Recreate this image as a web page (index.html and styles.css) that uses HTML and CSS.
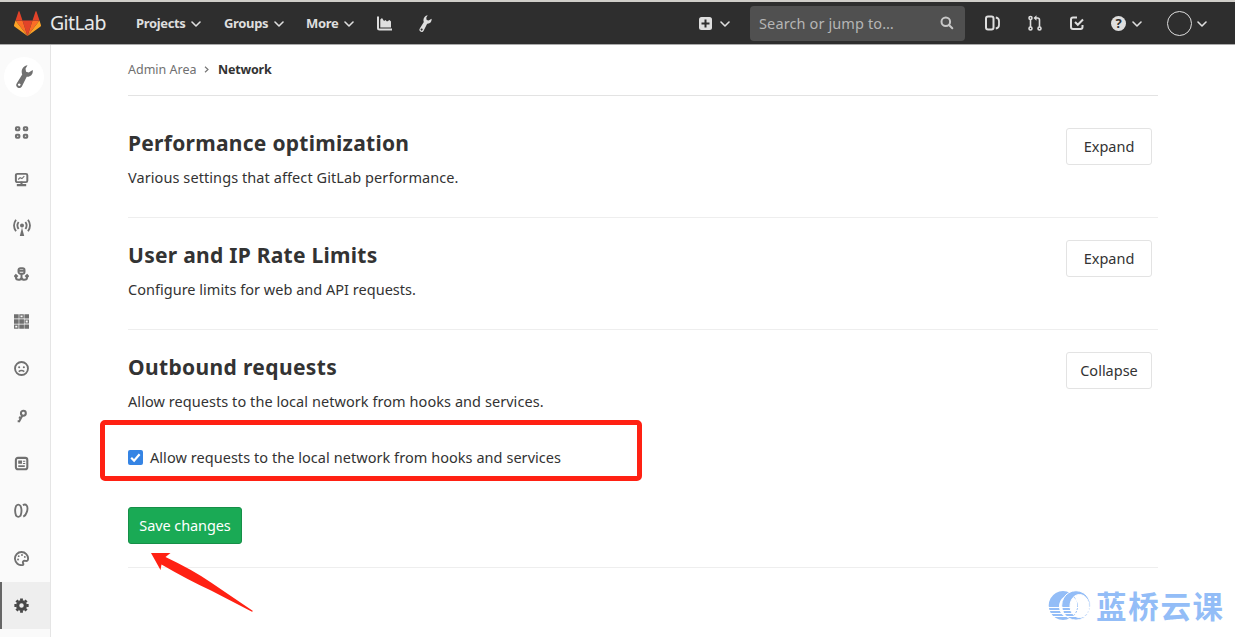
FILE: index.html
```html
<!DOCTYPE html>
<html lang="en">
<head>
<meta charset="utf-8">
<title>Network · GitLab</title>
<link rel="stylesheet" href="styles.css">
</head>
<body>
<svg class="defs" width="0" height="0" aria-hidden="true">
  <symbol id="chev" viewBox="0 0 10 6"><path d="M1 1l4 4 4-4" fill="none" stroke="currentColor" stroke-width="1.600" stroke-linecap="round" stroke-linejoin="round"/></symbol>
  <symbol id="wrench" viewBox="0 0 17 23"><path fill="currentColor" fill-rule="evenodd" d="M11.500.2 9.500 3.800l.6 3 2.600.8 4-2.600c.7 3.900-2 7.200-6 6.700L6 21.200c-.9 1.800-2.800 2.200-4.400 1.200-1.500-.9-1.900-2.600-.8-4.200L6.200 9.500C4.600 5.500 6.900.8 11.500.2zM3.200 18.400a1.300 1.300 0 1 0 .1 0z"/></symbol>
</svg>
<header class="navbar">
  <a class="brand">
    <svg width="27" height="25" viewBox="0 0 27 25"><path fill="#e24329" d="M13.500 25 8.500 9.500h10z"/><path fill="#fc6d26" d="M13.500 25 8.500 9.500H1.500zM13.500 25l5-15.500h7z"/><path fill="#fca326" d="M1.500 9.500 0 14.200c-.1.500 0 .9.400 1.200L13.500 25zM25.500 9.500l1.500 4.700c.1.500 0 .9-.4 1.200L13.500 25z"/><path fill="#e24329" d="M1.500 9.500h7l-3-9c-.2-.5-.8-.5-1 0zM25.500 9.500h-7l3-9c.2-.5.8-.5 1 0z"/></svg>
    <span class="brand-name">GitLab</span>
  </a>
  <nav class="menu">
    <a class="menu-item projects"><span>Projects</span><svg class="chev"><use href="#chev"/></svg></a>
    <a class="menu-item groups"><span>Groups</span><svg class="chev"><use href="#chev"/></svg></a>
    <a class="menu-item more"><span>More</span><svg class="chev"><use href="#chev"/></svg></a>
    <svg class="chart" width="15" height="15" viewBox="0 0 15 15"><path d="M1 .5V12q0 1.500 1.500 1.500H15" fill="none" stroke="currentColor" stroke-width="2"/><path fill="currentColor" d="M3.300 11.500v-8L5 2l2 3 1.500-1 1.500 1.500L12.500 4 14 5.500v6z"/></svg>
    <svg class="nav-wrench" width="13" height="17"><use href="#wrench"/></svg>
  </nav>
  <div class="tools">
    <svg width="13" height="13" viewBox="0 0 13 13"><rect width="13" height="13" rx="2.500" fill="currentColor"/><path d="M6.500 2.500v8M2.500 6.500h8" stroke="#2e2e2e" stroke-width="2"/></svg>
    <svg class="chev plus-chev"><use href="#chev"/></svg>
    <div class="search"><span>Search or jump to…</span><svg width="14" height="14" viewBox="0 0 14 14" fill="none" stroke="currentColor" stroke-width="2"><circle cx="5.800" cy="5.800" r="4.300"/><path d="m9 9 3.300 3.300" stroke-linecap="round"/></svg></div>
    <svg class="t-issues" width="15" height="16" viewBox="0 0 15 16" fill="none" stroke="currentColor" stroke-width="2"><rect x="1" y="1.500" width="7.500" height="13" rx="2"/><path d="M10.800 2.500q3.200.5 3.200 3.500v4q0 3-3.200 3.500" stroke-width="1.800"/></svg>
    <svg class="t-merge" width="14" height="16" viewBox="0 0 14 16" fill="none" stroke="currentColor" stroke-width="1.600"><circle cx="2.500" cy="3" r="1.500"/><circle cx="2.500" cy="13.500" r="1.500"/><circle cx="11.500" cy="13.500" r="1.500"/><path d="M2.500 4.500V12M11.500 12V5q0-2-2-2H7"/><path d="M8.500.3v5.400L5.500 3z" fill="currentColor" stroke="none"/></svg>
    <svg class="t-todo" width="14" height="14" viewBox="0 0 14 14" fill="none" stroke="currentColor" stroke-width="2"><path d="M7 1.500H3q-2 0-2 2V11q0 2 2 2h7.500q2 0 2-2V9"/><path d="m5 6 2.800 2.800L13 3.500"/></svg>
    <span class="help">?</span>
    <svg class="chev help-chev"><use href="#chev"/></svg>
    <span class="avatar"></span>
    <svg class="chev user-chev"><use href="#chev"/></svg>
  </div>
</header>
<div class="page">
  <aside class="sidebar">
    <div class="context"><span class="context-icon"><svg width="17" height="23"><use href="#wrench"/></svg></span></div>
    <a class="side"><svg viewBox="0 0 16 16"><g fill="none" stroke="currentColor" stroke-width="2.200"><rect x="2.100" y="2.300" width="3.600" height="3.300" rx=".8"/><rect x="10.500" y="2.300" width="3.600" height="3.300" rx=".8"/><rect x="2.100" y="10.300" width="3.600" height="3.300" rx=".8"/><rect x="10.500" y="10.300" width="3.600" height="3.300" rx=".8"/></g></svg></a>
    <a class="side"><svg viewBox="0 0 16 16" fill="none" stroke="currentColor"><rect x="2" y="2" width="12.200" height="8.800" rx="1.500" stroke-width="2.100"/><path d="m4.500 8 2-2 2 1 2.500-2.500" stroke-width="1.200"/><path d="M8 10v3M3 14h10" stroke-width="2.200"/></svg></a>
    <a class="side"><svg class="wide" viewBox="0 0 18 18" fill="none" stroke="currentColor" stroke-width="1.800"><circle cx="9" cy="7.500" r="2" fill="currentColor" stroke="none"/><path d="M5.600 4q-2.400 3.500 0 7M12.400 4q2.400 3.500 0 7M3 1.700Q-1 7.500 3 13.300M15 1.700q4 5.800 0 11.600"/><path d="m9 9.500-2.300 9h4.600z" fill="currentColor" stroke="none"/></svg></a>
    <a class="side"><svg viewBox="0 0 16 16" fill="none" stroke="currentColor" stroke-width="2.100"><rect x="4.800" y="1.300" width="6.400" height="5.800" rx="2"/><path d="M8 7v7M5 4h6M2 8.500V11q0 2.700 3 2.700 2.500 0 3-2.700.5 2.700 3 2.700 3 0 3-2.700V8.500M.3 10.500 2 8.700l2 1.800M12 10.500l2-1.800 1.700 1.800"/></svg></a>
    <a class="side"><svg viewBox="0 0 16 16"><path fill="currentColor" d="M0 .3h5v4.600H0zM11.100.3H16v4.600h-4.900zM0 5.700h5v4.600H0zM5.600 5.700h5v4.600h-5zM5.600 11.200h5v4.600h-5zM11.100 11.200H16v4.600h-4.900z"/><path fill="none" stroke="currentColor" stroke-width="1.300" d="M6.300 1h3.500v3.200H6.300zM11.800 6.400h3.500v3.200h-3.500zM.7 11.900h3.500v3.200H.7z"/></svg></a>
    <a class="side"><svg viewBox="0 0 16 16" fill="none" stroke="currentColor"><circle cx="8" cy="8" r="6.900" stroke-width="2"/><path d="M5 11.300q3-2.500 6 0" stroke-width="1.500"/><circle cx="5.500" cy="6.700" r="1.100" fill="currentColor" stroke="none"/><circle cx="10.500" cy="6.700" r="1.100" fill="currentColor" stroke="none"/></svg></a>
    <a class="side"><svg viewBox="0 0 16 16" fill="none" stroke="currentColor" stroke-width="2.200"><circle cx="10" cy="4.500" r="2.600"/><path d="m8.900 7-3.800 7M7.600 9.800 5.200 8.800M6.200 13H3.900"/></svg></a>
    <a class="side"><svg viewBox="0 0 16 16" fill="none" stroke="currentColor"><rect x="2" y="2" width="12.200" height="12.200" rx="2.200" stroke-width="2.200"/><path d="M4.500 10.800h7" stroke-width="1.800"/><path d="M4.500 4.800h4v3.500h-4z" fill="currentColor" stroke="none"/><path d="M9.500 5.500H12M9.500 8H12" stroke-width="1.100"/></svg></a>
    <a class="side"><svg viewBox="0 0 16 16" fill="none" stroke="currentColor" stroke-width="2"><path d="M2.200 3.200q-2 5 0 10.300 2.300 2.500 4.800 0 2-5.300 0-10.300-2.500-3-4.800 0zM9.500 2.300q2.500-1.600 4 .4 1.800 2.500 0 7.300-1 3.500-3.600 4.500"/></svg></a>
    <a class="side"><svg viewBox="0 0 16 16" fill="none" stroke="currentColor" stroke-width="2"><path d="M15 8.500A7 7 0 1 0 9 15c1 0 1.200-.8.800-1.700-1-2 .3-3.300 2.300-2.800 1.700.4 2.800-.1 2.900-2z"/><g fill="currentColor" stroke="none"><circle cx="5" cy="5.500" r="1"/><circle cx="8.500" cy="4.300" r="1"/><circle cx="11.500" cy="6.300" r="1"/><circle cx="4.300" cy="9" r="1"/></g></svg></a>
    <a class="side active"><svg viewBox="0 0 16 16" fill="none" stroke="currentColor"><circle cx="8" cy="8" r="4.100" stroke-width="3.400"/><path d="M8 .4v2.500M8 13.100v2.500M.4 8h2.500M13.100 8h2.500M2.600 2.600l1.700 1.700M11.700 11.700l1.700 1.700M2.600 13.400l1.700-1.700M11.700 4.300l1.700-1.700" stroke-width="3"/></svg></a>
  </aside>
  <main class="content">
    <div class="crumbs"><span class="crumb-area">Admin Area</span><svg width="5" height="7" viewBox="0 0 5 7"><path d="m1 .7 3 2.800-3 2.800" fill="none" stroke="#777" stroke-width="1.200"/></svg><b class="crumb-page">Network</b></div>
    <section class="setting first">
      <div><h4 class="h-perf">Performance optimization</h4><p class="p-perf">Various settings that affect GitLab performance.</p></div>
      <button class="btn">Expand</button>
    </section>
    <section class="setting">
      <div><h4 class="h-user">User and IP Rate Limits</h4><p class="p-user">Configure limits for web and API requests.</p></div>
      <button class="btn">Expand</button>
    </section>
    <section class="setting last">
      <div>
        <h4 class="h-out">Outbound requests</h4><p class="p-out">Allow requests to the local network from hooks and services.</p>
        <label class="check"><span class="box"><svg width="15" height="15" viewBox="0 0 15 15"><path d="m3.200 7.700 2.900 3 5.500-6.500" fill="none" stroke="#fff" stroke-width="2.200"/></svg></span><span class="check-text">Allow requests to the local network from hooks and services</span></label>
        <button class="save">Save changes</button>
      </div>
      <button class="btn collapse">Collapse</button>
    </section>
  </main>
</div>
<div class="highlight"></div>
<svg class="arrow" width="104" height="60" viewBox="0 0 104 60"><path fill="#ff2113" d="M0 0h19.500L14.500 4Q42 17 60 29.500L102 58l-1 .7L60 37.500Q38 27.500 10.500 11.500L9.500 17z"/></svg>
<div class="watermark">
  <svg width="43" height="31" viewBox="0 0 43 31">
    <path fill="#93bdf7" fill-rule="evenodd" d="M15 1a14.300 14.500 0 1 0 .01 0zM20.500 5.500a9.500 11 0 1 1-.01 0z"/>
    <path fill="#93bdf7" stroke="#fff" stroke-width="1" fill-rule="evenodd" d="M28 .7a14.300 14.700 0 1 0 .01 0zM31.500 4.500a9.500 11.500 0 1 1-.01 0z"/>
    <path stroke="#fff" stroke-width="1" d="M0 17.500h43M0 20.500h43M0 23.500h43M0 26.500h43"/>
  </svg>
  <span>蓝桥云课</span>
</div>
</body>
</html>
```
FILE: styles.css
```css
* { box-sizing: border-box; }
body { margin: 0; width: 1235px; height: 637px; overflow: hidden; position: relative; background: #fff; color: #333; font-family: "Noto Sans", "Open Sans", sans-serif; font-size: 14.500px; }
.defs { position: absolute; }
svg { display: block; flex: none; }
span, h4, p, b, button { white-space: nowrap; }
.navbar { height: 45px; background: #2e2e2e; border-top: 2px solid #d0cec9; border-bottom: 1px solid #aaa; color: #dedede; display: flex; align-items: center; padding-left: 14px; }
.brand { display: flex; align-items: center; gap: 9px; width: 122px; }
.brand-name { font-size: 19.500px; line-height: 24px; letter-spacing: -0.600px; color: #e8e8e8; }
.menu { display: flex; align-items: center; }
.menu-item { display: flex; align-items: center; gap: 6px; font-size: 13px; font-weight: 700; }
.chev { width: 10px; height: 6px; margin-top: 2px; }
.projects { width: 88px; }
.groups { width: 82px; }
.more { width: 71px; }
.projects span, .groups span, .more span { letter-spacing: -0.350px; }
.nav-wrench { margin-left: 27px; }
.tools { display: flex; align-items: center; margin-left: auto; padding-right: 28px; }
.plus-chev { margin-left: 8px; }
.search { width: 215px; height: 35px; margin-left: 20px; padding: 0 11px 0 9px; border-radius: 4px; background: #505050; display: flex; align-items: center; justify-content: space-between; color: #b5b5b5; font-size: 14.500px; letter-spacing: 0.120px; }
.search svg { color: #c8c8c8; }
.t-issues { margin-left: 20px; }
.t-merge { margin-left: 28px; }
.t-todo { margin-left: 28px; }
.help { margin-left: 27px; width: 15px; height: 15px; border-radius: 50%; background: #dedede; color: #2e2e2e; font-weight: 700; font-size: 13px; line-height: 15px; text-align: center; }
.help-chev { margin-left: 6px; }
.avatar { margin-left: 25px; width: 25px; height: 25px; border: 1px solid #ddd; border-radius: 50%; }
.user-chev { margin-left: 5px; }
.page { display: flex; height: 592px; }
.sidebar { width: 51px; background: #fafafa; border-right: 1px solid #e5e5e5; color: #707070; }
.context { height: 63.700px; display: flex; align-items: center; padding-left: 4px; }
.context-icon { width: 40px; height: 40px; border-radius: 50%; background: #fff; display: flex; align-items: center; justify-content: center; }
.side { height: 47.300px; padding-left: 14px; display: flex; align-items: center; }
.side svg { width: 15px; height: 15px; }
.side .wide { width: 18px; height: 18px; margin-left: -1px; }
.side.active { background: #eee; border-left: 2px solid #666; padding-left: 12px; color: #484848; }
.content { width: 1030px; margin-left: 77px; }
.crumbs { height: 51px; padding-bottom: 2px; border-bottom: 1px solid #e3e3e3; display: flex; align-items: center; font-size: 12.500px; }
.crumb-area { color: #707070; width: 76px; }
.crumb-page { margin-left: 9px; letter-spacing: -0.200px; }
.setting { height: 112px; padding-top: 22px; border-bottom: 1px solid #eee; display: flex; justify-content: space-between; }
.setting.first { height: 122px; padding-top: 32px; }
.setting.last { height: 238px; }
h4 { margin: 0; font-size: 21px; line-height: 30px; font-weight: 700; letter-spacing: 0.270px; }
.h-out { letter-spacing: 0.360px; }
p { margin: 9px 0 0; line-height: 20px; letter-spacing: 0.060px; }
.p-perf { letter-spacing: 0.080px; }
.p-user { letter-spacing: 0.020px; }
.btn { width: 86px; height: 37px; margin-right: 6px; padding: 0 0 2px; border: 1px solid #e3e3e3; border-radius: 3px; background: #fff; color: #333; font: 14.500px/20px "Noto Sans", sans-serif; }
.check { display: flex; align-items: center; gap: 7px; margin-top: 36px; height: 20px; letter-spacing: 0.050px; }
.box { width: 15px; height: 15px; border-radius: 2px; background: #3584e4; }
.save { display: block; width: 114px; height: 37px; margin-top: 40px; padding: 0 0 2px; border: 1px solid #168f48; border-radius: 3px; background: #1aaa55; color: #fff; font: 14.500px/20px "Noto Sans", sans-serif; letter-spacing: -0.100px; }
.highlight { position: absolute; left: 100px; top: 420px; width: 542px; height: 61px; border: 5px solid #ff2113; border-radius: 5px; }
.arrow { position: absolute; left: 151px; top: 553px; }
.watermark { position: absolute; left: 1048px; top: 590px; display: flex; align-items: center; gap: 5px; height: 31px; color: #93bdf7; font: 700 30.500px/31px "Noto Sans CJK SC", sans-serif; letter-spacing: 1.700px; }
```
